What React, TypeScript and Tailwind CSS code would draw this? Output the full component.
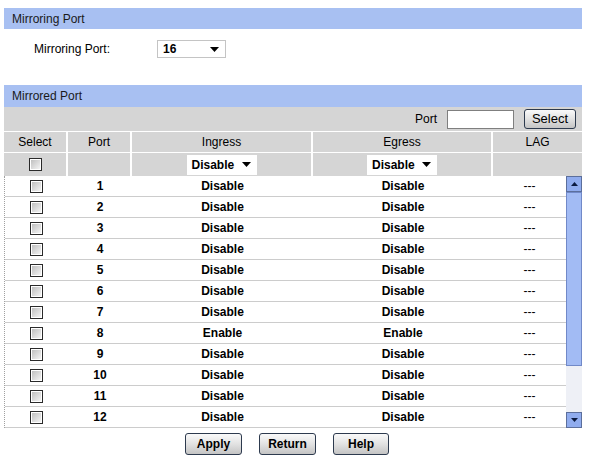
import React from "react";

const rows = Array.from({ length: 12 }, (_, i) => ({
  port: i + 1,
  ingress: i === 7 ? "Enable" : "Disable",
  egress: i === 7 ? "Enable" : "Disable",
}));

function Check() {
  return (
    <div className="h-[13px] w-[13px] border border-[#2a2a2a] bg-white p-[1px]">
      <div className="h-full w-full bg-gradient-to-br from-[#c0c0c0] to-[#f4f4f4]" />
    </div>
  );
}

function Arrow() {
  return (
    <svg width="9" height="5" viewBox="0 0 9 5">
      <path d="M0 0h9L4.5 5z" fill="#000" />
    </svg>
  );
}

function Dropdown({ value, className }: { value: string; className: string }) {
  return (
    <div className={`flex items-center justify-between bg-white pl-[5px] pr-[6px] font-bold ${className}`}>
      <span>{value}</span>
      <Arrow />
    </div>
  );
}

function Btn({ label, className }: { label: string; className: string }) {
  return (
    <div
      className={`flex items-center justify-center rounded-[3px] border border-[#2d3a4e] bg-gradient-to-b from-[#fafafa] via-[#e2e2e2] to-[#c4c4c4] ${className}`}
    >
      {label}
    </div>
  );
}

export default function App() {
  return (
    <div className="relative h-[463px] w-[594px] overflow-hidden bg-white font-['Liberation_Sans',Arial,sans-serif] text-[12px] text-black">
      <div className="ml-[4px] mt-[8px] flex h-[21px] w-[578px] items-center bg-[#a8c0f2] pl-[8px] text-[#1a1a1a]">
        Mirroring Port
      </div>

      <div className="flex h-[32px] items-center pt-[8px]">
        <span className="ml-[34px] w-[123px]">Mirroring Port:</span>
        <Dropdown value="16" className="h-[18px] w-[69px] border border-[#c4c4c4]" />
      </div>

      <div className="ml-[4px] mt-[24px] flex h-[22px] w-[578px] items-center bg-[#a8c0f2] pl-[8px] text-[#1a1a1a]">
        Mirrored Port
      </div>

      <div className="ml-[4px] w-[578px] bg-[#d5d5d5]">
        <div className="flex h-[24px] items-center justify-end">
          <span className="mr-[10px]">Port</span>
          <div className="h-[19px] w-[67px] border border-[#7f7f7f] bg-white" />
          <Btn label="Select" className="ml-[10px] mr-[6px] h-[20px] w-[52px] text-[13px]" />
        </div>
        <div className="grid h-[21px] grid-cols-[64px_64px_181px_180px_89px] border-t border-white text-center leading-[20px]">
          <div className="border-r-2 border-white">Select</div>
          <div className="border-r-2 border-white">Port</div>
          <div className="border-r-2 border-white">Ingress</div>
          <div className="border-r-2 border-white">Egress</div>
          <div>LAG</div>
        </div>
        <div className="grid h-[24px] grid-cols-[64px_64px_181px_180px_89px] items-center border-t border-white">
          <div className="flex h-full items-center justify-center border-r-2 border-white">
            <Check />
          </div>
          <div className="h-full border-r-2 border-white" />
          <div className="flex h-full items-center justify-center border-r-2 border-white">
            <Dropdown value="Disable" className="h-[20px] w-[70px]" />
          </div>
          <div className="flex h-full items-center justify-center border-r-2 border-white">
            <Dropdown value="Disable" className="h-[20px] w-[70px]" />
          </div>
          <div />
        </div>
      </div>

      <div className="ml-[4px] flex w-[578px]">
        <div className="w-[562px] border-l border-dotted border-[#a0a0a0]">
          {rows.map((r) => (
            <div
              key={r.port}
              className="grid h-[21px] grid-cols-[63px_64px_181px_180px_73px] items-center border-b border-[#cccccc] text-center font-bold"
            >
              <div className="flex justify-center">
                <Check />
              </div>
              <div>{r.port}</div>
              <div>{r.ingress}</div>
              <div>{r.egress}</div>
              <div className="font-normal">---</div>
            </div>
          ))}
        </div>
        <div className="flex h-[252px] w-[16px] flex-col bg-[#eef0f6]">
          <div className="flex h-[16px] items-center justify-center border border-[#5c6f9c] bg-[#90acee]">
            <svg width="7" height="4" viewBox="0 0 7 4">
              <path d="M0 4h7L3.5 0z" fill="#0b1a40" />
            </svg>
          </div>
          <div className="h-[174px] border border-[#7189c8] bg-[#a2bbf4]" />
          <div className="flex-1" />
          <div className="flex h-[16px] items-center justify-center border border-[#5c6f9c] bg-[#90acee]">
            <svg width="7" height="4" viewBox="0 0 7 4">
              <path d="M0 0h7L3.5 4z" fill="#0b1a40" />
            </svg>
          </div>
        </div>
      </div>

      <div className="mt-[5px] flex font-bold">
        <Btn label="Apply" className="ml-[185px] h-[22px] w-[57px]" />
        <Btn label="Return" className="ml-[17px] h-[22px] w-[57px]" />
        <Btn label="Help" className="ml-[17px] h-[22px] w-[56px]" />
      </div>
    </div>
  );
}
